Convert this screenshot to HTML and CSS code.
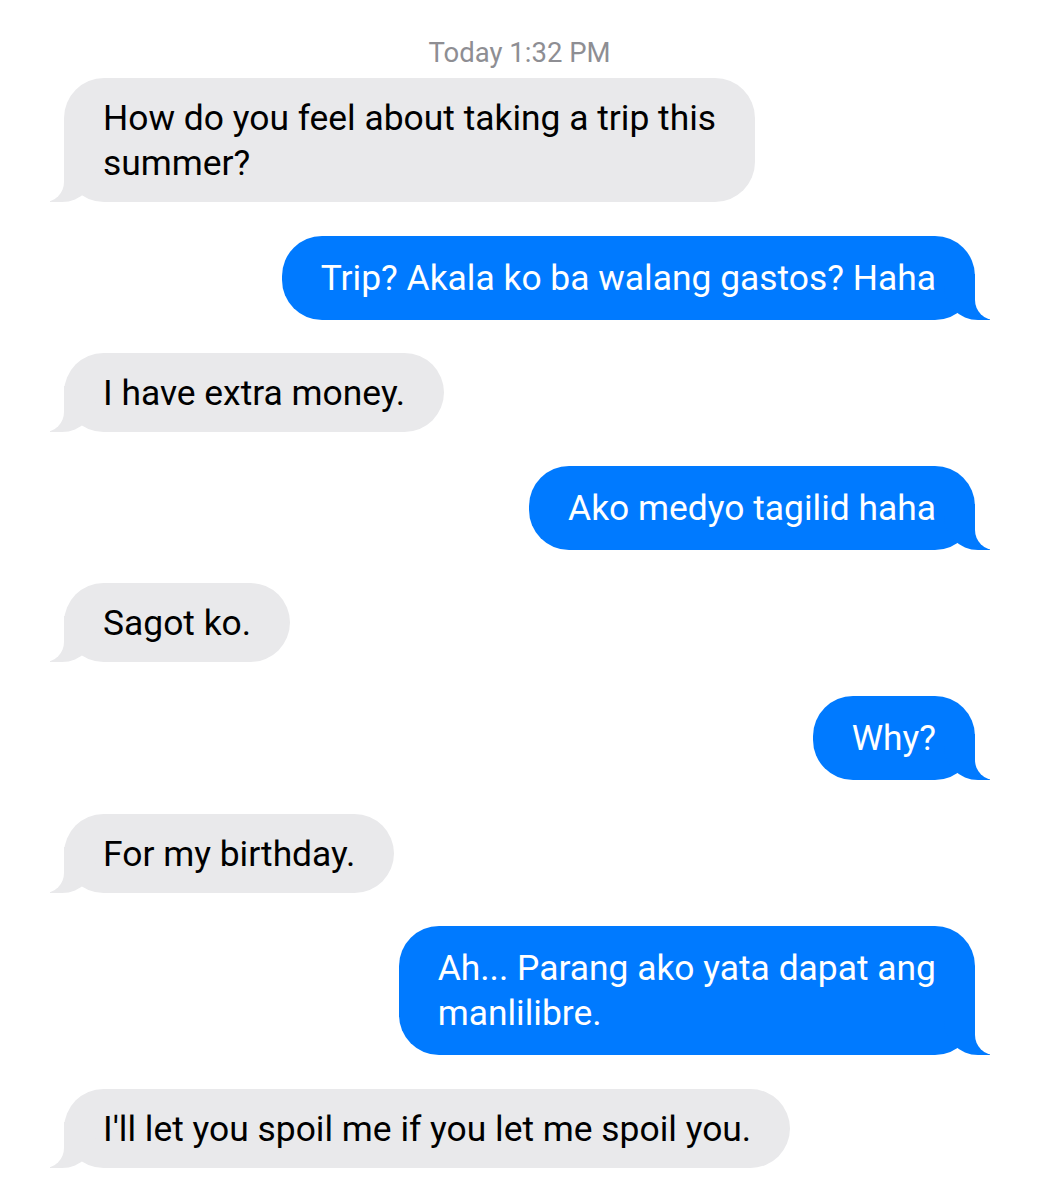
FILE: index.html
```html
<!doctype html>
<html lang="en">

<head>
	<meta charset="UTF-8">
	<title>Messages</title>
	<link rel="stylesheet" href="styles.css">
</head>

<body>
	<div class="thread">
		<p class="stamp">Today 1:32 PM</p>

		<div class="msg them">How do you feel about taking a trip this<br>summer?</div>
		<div class="msg me">Trip? Akala ko ba walang gastos? Haha</div>
		<div class="msg them">I have extra money.</div>
		<div class="msg me">Ako medyo tagilid haha</div>
		<div class="msg them">Sagot ko.</div>
		<div class="msg me">Why?</div>
		<div class="msg them">For my birthday.</div>
		<div class="msg me">Ah... Parang ako yata dapat ang<br>manlilibre.</div>
		<div class="msg them">I'll let you spoil me if you let me spoil you.</div>
	</div>
</body>

</html>
```

FILE: styles.css
```css
* {
	padding: 0;
	margin: 0;
	box-sizing: border-box;
}

body {
	background: #fff;
	font-family: Roboto, 'Liberation Sans', sans-serif;
}

.thread {
	display: flex;
	flex-direction: column;
	gap: 33.6px;
	padding: 38px 63px 30px 64px;
}

.stamp {
	text-align: center;
	color: #8e8e93;
	font-size: 27.5px;
	line-height: 30px;
	margin-bottom: -23.6px;
}

.msg {
	position: relative;
	max-width: 760px;
	border-radius: 40px;
	font-size: 35.4px;
	line-height: 45px;
}

/* tail: coloured block + white block cut over it */
.msg::before,
.msg::after {
	content: "";
	position: absolute;
	bottom: 0;
	height: 46px;
}

.them {
	align-self: flex-start;
	padding: 18px 39px 16px;
	background: #e9e9eb;
	color: #000;
}

.them::before {
	left: -14px;
	width: 46px;
	background: #e9e9eb;
	border-bottom-right-radius: 34px;
}

.them::after {
	left: -20px;
	width: 20px;
	background: #fff;
	border-bottom-right-radius: 20px;
}

.me {
	align-self: flex-end;
	padding: 20px 39px 19px;
	background: #007aff;
	color: #fff;
}

.me::before {
	right: -15px;
	width: 46px;
	background: #007aff;
	border-bottom-left-radius: 34px;
}

.me::after {
	right: -21px;
	width: 21px;
	background: #fff;
	border-bottom-left-radius: 20px;
}
```
